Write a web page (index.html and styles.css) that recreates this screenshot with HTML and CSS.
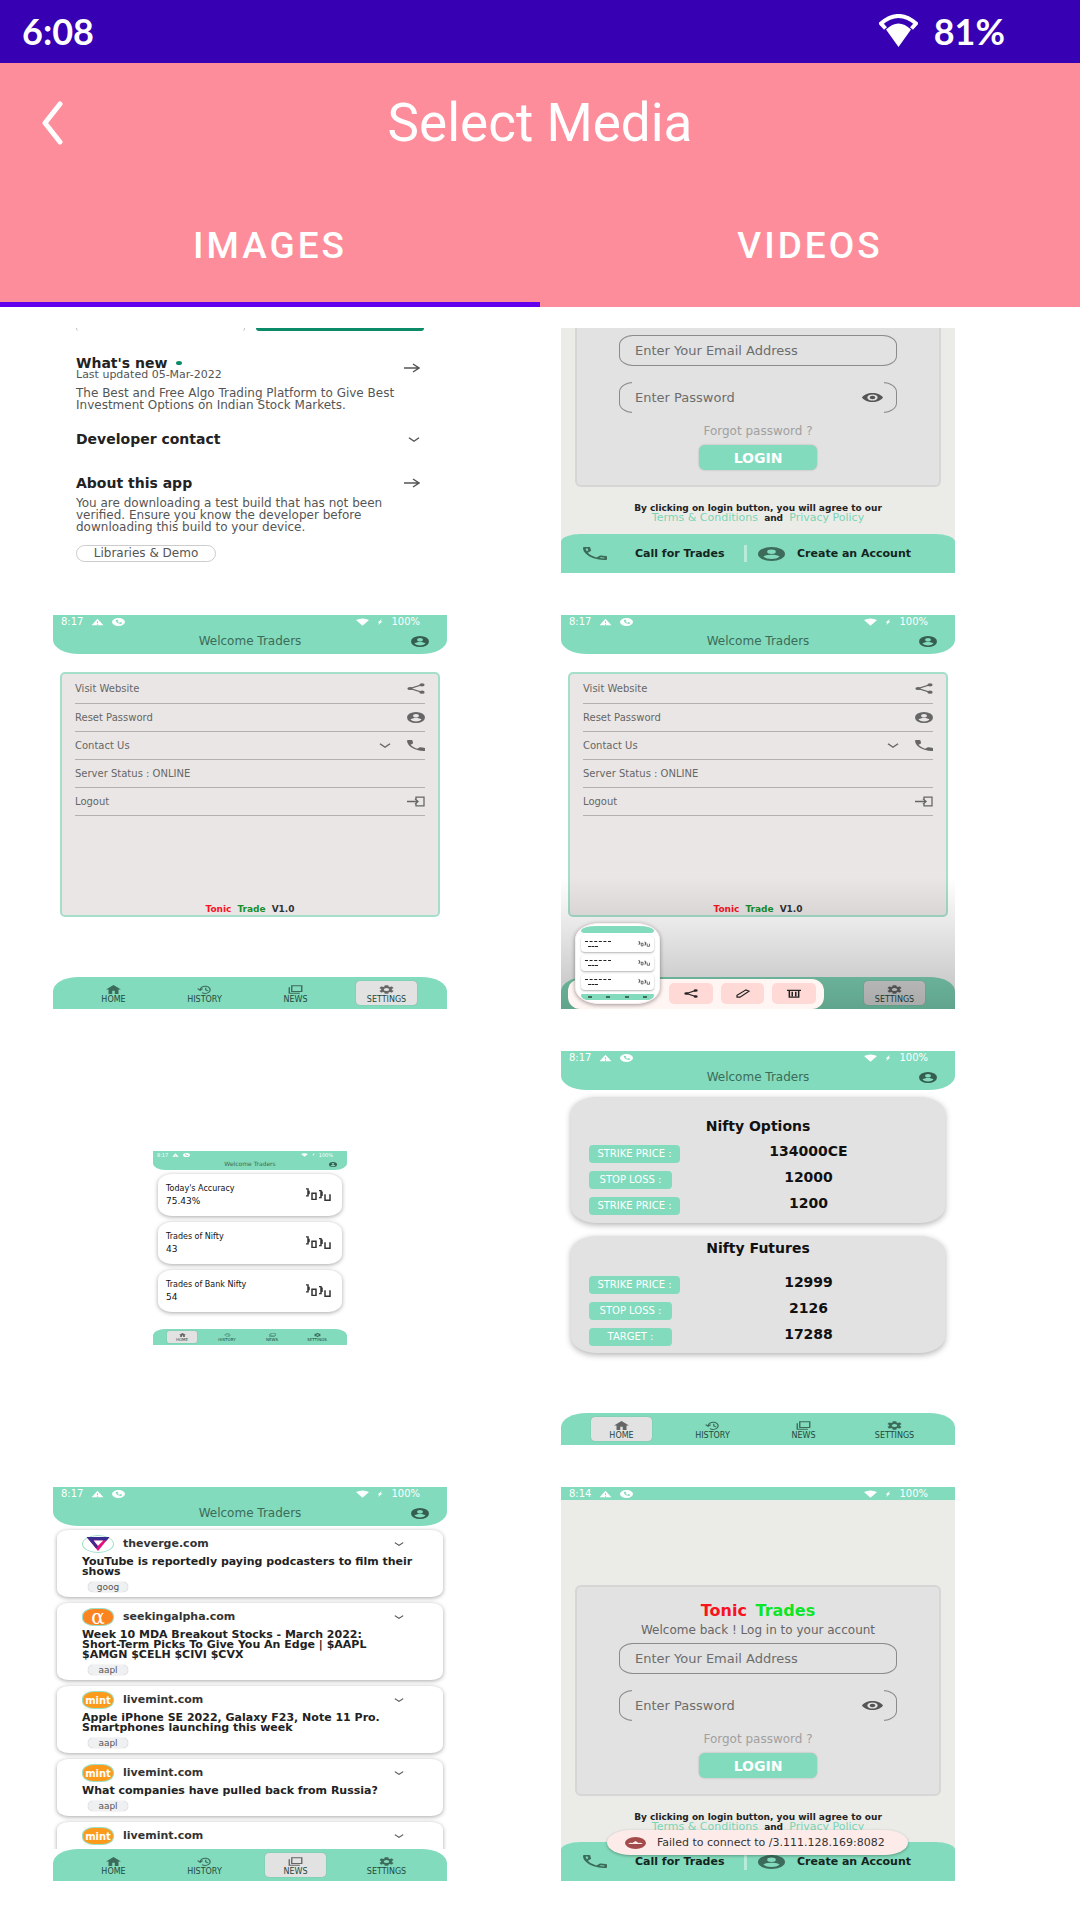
FILE: index.html
```html
<!DOCTYPE html>
<html lang="en">
<head>
<meta charset="utf-8">
<meta name="viewport" content="width=device-width, initial-scale=1">
<title>Select Media</title>
<link rel="stylesheet" href="styles.css">
</head>
<body>
<svg class="defs" aria-hidden="true">
  <symbol id="wifi" viewBox="0 0 39 33" preserveAspectRatio="none"><path d="M19.500 33 7 15.500Q19.500 3.500 32 15.500Z" fill="currentColor"/><path d="M6.500 14.500 2 9.500Q19.500-5.500 37 9.500L32.500 14.500" fill="none" stroke="currentColor" stroke-width="4"/></symbol>
  <symbol id="wifi-full" viewBox="0 0 24 24" preserveAspectRatio="none"><path d="M12 23 0 6Q12-3 24 6Z" fill="currentColor"/></symbol>
  <symbol id="alert" viewBox="0 0 24 24" preserveAspectRatio="none"><path d="M1 22h22L12 2zm10-4h2v2h-2zm0-8h2v6h-2z" fill="currentColor" fill-rule="evenodd"/></symbol>
  <symbol id="call-dot" viewBox="0 0 24 24" preserveAspectRatio="none"><path d="M12 0a12 12 0 1 0 0 24 12 12 0 0 0 0-24zM7 6l3-1 2 4-2 2q1 2 4 3l2-2 3 3-2 3Q7 17 7 6z" fill="currentColor" fill-rule="evenodd"/></symbol>
  <symbol id="bolt" viewBox="0 0 24 24" preserveAspectRatio="none"><path d="M20 0 2 14h8L4 24 22 10h-8z" fill="currentColor"/></symbol>
  <symbol id="user" viewBox="0 0 20 20" preserveAspectRatio="none"><path d="M10 0a10 10 0 1 0 0 20 10 10 0 0 0 0-20zm0 3.500a3.200 3.200 0 1 1 0 6.400 3.200 3.200 0 0 1 0-6.400zm0 13.700a7.200 7.200 0 0 1-6-3.200c0-2 4-3.100 6-3.100s6 1.100 6 3.100a7.200 7.200 0 0 1-6 3.200z" fill="currentColor" fill-rule="evenodd"/></symbol>
  <symbol id="share" viewBox="0 0 24 24" preserveAspectRatio="none"><path d="M20 4 4 12l16 8" fill="none" stroke="currentColor" stroke-width="2.500"/><circle cx="20" cy="4" r="3.500" fill="currentColor"/><circle cx="4" cy="12" r="3.500" fill="currentColor"/><circle cx="20" cy="20" r="3.500" fill="currentColor"/></symbol>
  <symbol id="phone" viewBox="3 3 18 18" preserveAspectRatio="none"><path d="M6.540 5c.060.890.210 1.760.450 2.590l-1.200 1.200c-.410-1.200-.670-2.470-.760-3.790h1.510m9.860 12.020c.850.240 1.720.390 2.600.450v1.490c-1.320-.090-2.590-.350-3.800-.750l1.200-1.190M7.500 3H4c-.550 0-1 .450-1 1 0 9.390 7.610 17 17 17 .550 0 1-.450 1-1v-3.490c0-.550-.450-1-1-1-1.240 0-2.450-.200-3.570-.570-.100-.040-.210-.050-.310-.050-.260 0-.510.100-.710.290l-2.200 2.200c-2.830-1.450-5.150-3.760-6.590-6.590l2.200-2.200c.280-.280.360-.670.250-1.020C8.700 6.450 8.500 5.250 8.500 4c0-.550-.450-1-1-1z" fill="currentColor"/></symbol>
  <symbol id="phone-solid" viewBox="3 3 18 18" preserveAspectRatio="none"><path d="M6.620 10.790c1.440 2.830 3.760 5.140 6.590 6.590l2.200-2.200c.270-.270.670-.360 1.020-.240 1.120.370 2.330.570 3.570.570.550 0 1 .450 1 1V20c0 .550-.450 1-1 1-9.390 0-17-7.610-17-17 0-.550.450-1 1-1h3.500c.550 0 1 .450 1 1 0 1.250.200 2.450.570 3.570.110.350.030.740-.250 1.020z" fill="currentColor"/></symbol>
  <symbol id="chevron" viewBox="0 0 12 6" preserveAspectRatio="none"><path d="M1 1l5 4 5-4" fill="none" stroke="currentColor" stroke-width="1.500"/></symbol>
  <symbol id="arrow" viewBox="0 0 16 10" preserveAspectRatio="none"><path d="M0 5h15M9 1l6 4-6 4" fill="none" stroke="currentColor" stroke-width="1.500"/></symbol>
  <symbol id="logout" viewBox="0 0 18 10" preserveAspectRatio="none"><path d="M0 5h11M8 2.500 11 5 8 7.500M9 3V1h8v8H9V7" fill="none" stroke="currentColor" stroke-width="1.300"/></symbol>
  <symbol id="home" viewBox="0 0 24 20" preserveAspectRatio="none"><path d="M10 20v-7h4v7h6V10h4L12 0 0 10h4v10z" fill="currentColor"/></symbol>
  <symbol id="history" viewBox="0 0 24 20" preserveAspectRatio="none"><path d="M5 11a8 8 0 1 1 3 6M1 8l4 4 4-4M14 6v5l4 2" fill="none" stroke="currentColor" stroke-width="2"/></symbol>
  <symbol id="news" viewBox="0 0 24 20" preserveAspectRatio="none"><path d="M6 1.500h16v13H6zM2 5v13.500h17" fill="none" stroke="currentColor" stroke-width="2.200"/></symbol>
  <symbol id="gear" viewBox="2 2 20 20" preserveAspectRatio="none"><path d="M19.140 12.940c.040-.300.060-.610.060-.940 0-.320-.020-.640-.070-.940l2.030-1.580c.180-.140.230-.410.120-.610l-1.920-3.320c-.120-.220-.370-.290-.590-.220l-2.390.960c-.500-.380-1.030-.700-1.620-.940L14.400 2.810c-.040-.240-.240-.410-.480-.410h-3.840c-.240 0-.430.170-.470.410L9.250 5.350C8.660 5.590 8.120 5.920 7.630 6.290L5.240 5.330c-.220-.080-.470 0-.590.220L2.740 8.870c-.120.210-.080.470.120.610l2.030 1.580c-.050.300-.090.630-.090.940s.020.640.070.940l-2.030 1.580c-.180.140-.230.410-.120.610l1.920 3.320c.120.220.370.290.590.220l2.390-.960c.500.380 1.030.700 1.620.940l.360 2.540c.050.240.240.410.480.410h3.840c.240 0 .440-.170.470-.410l.360-2.540c.590-.240 1.130-.560 1.620-.940l2.390.960c.220.080.470 0 .590-.220l1.920-3.320c.120-.220.070-.470-.120-.610zM12 15.600a3.600 3.600 0 1 1 0-7.200 3.600 3.600 0 0 1 0 7.200z" fill="currentColor"/></symbol>
  <symbol id="eye" viewBox="1 4 22 16" preserveAspectRatio="none"><path d="M12 4C7 4 2.700 7.300 1 12c1.700 4.700 6 8 11 8s9.300-3.300 11-8c-1.700-4.700-6-8-11-8zm0 13.400a5.400 5.400 0 1 1 0-10.800 5.400 5.400 0 0 1 0 10.800zm0-8.400a3 3 0 1 0 0 6 3 3 0 0 0 0-6z" fill="currentColor"/></symbol>
  <symbol id="pencil" viewBox="0 0 14 10" preserveAspectRatio="none"><path d="M1 9V7l9-6 3 1.500L4 9z" fill="none" stroke="currentColor" stroke-width="1.200"/></symbol>
  <symbol id="trash" viewBox="0 0 12 10" preserveAspectRatio="none"><path d="M0 1.500h12M2 2v7h8V2M4.500 3v5M7.500 3v5" fill="none" stroke="currentColor" stroke-width="1.300"/></symbol>
  <symbol id="candles" viewBox="0 0 26 16" preserveAspectRatio="none"><path d="M1 1h2v8H1M4 3v4M7 6h4v7H7zM14 3h2v8h-2M17 4v5M20 7v7h5V7" fill="none" stroke="currentColor" stroke-width="1.500"/></symbol>
</svg>

<header class="top">
  <div class="device-bar">
    <span>6:08</span>
    <span class="device-state"><svg class="device-wifi"><use href="#wifi"/></svg>81%</span>
  </div>
  <div class="toolbar">
    <button class="back" type="button" aria-label="Back"><svg viewBox="0 0 22 44"><path d="M19 3 4 22l15 19" fill="none" stroke="currentColor" stroke-width="5" stroke-linecap="round" stroke-linejoin="round"/></svg></button>
    <h1>Select Media</h1>
  </div>
  <nav class="tabs" role="tablist">
    <button class="tab tab-on" type="button" role="tab" aria-selected="true">IMAGES</button>
    <button class="tab" type="button" role="tab" aria-selected="false">VIDEOS</button>
  </nav>
</header>

<main class="gallery">
  <section class="shot cut store">
    <div class="store-bars"><i class="bar-line"></i><i class="bar-fill"></i></div>
    <div class="store-row whats">
      <div><h2>What's new <i class="dot"></i></h2><small>Last updated 05-Mar-2022</small></div>
      <svg class="i-arrow"><use href="#arrow"/></svg>
    </div>
    <p>The Best and Free Algo Trading Platform to Give Best<br>Investment Options on Indian Stock Markets.</p>
    <div class="store-row contact"><h2>Developer contact</h2><svg class="i-chevron"><use href="#chevron"/></svg></div>
    <div class="store-row about"><h2>About this app</h2><svg class="i-arrow"><use href="#arrow"/></svg></div>
    <p>You are downloading a test build that has not been<br>verified. Ensure you know the developer before<br>downloading this build to your device.</p>
    <span class="chip">Libraries &amp; Demo</span>
  </section>

  <section class="shot cut login">
    <form class="login-card">
      <label class="field"><input type="email" placeholder="Enter Your Email Address" aria-label="Email address"></label>
      <label class="field field-open"><input type="password" placeholder="Enter Password" aria-label="Password"><svg class="i-eye"><use href="#eye"/></svg></label>
      <a class="forgot" href="#">Forgot password ?</a>
      <button class="submit" type="button">LOGIN</button>
    </form>
    <p class="legal">By clicking on login button, you will agree to our<br><a href="#">Terms &amp; Conditions</a> and <a href="#">Privacy Policy</a></p>
    <div class="login-bar">
      <svg class="i-call"><use href="#phone"/></svg><b>Call for Trades</b><i class="split"></i><svg class="i-account"><use href="#user"/></svg><b>Create an Account</b>
    </div>
  </section>

  <section class="shot">
    <header class="app-head">
      <div class="mini-bar"><span>8:17</span><svg><use href="#alert"/></svg><svg><use href="#call-dot"/></svg><svg class="push"><use href="#wifi-full"/></svg><svg class="i-bolt"><use href="#bolt"/></svg><span>100%</span></div>
      <div class="app-title"><span>Welcome Traders</span><svg class="i-user"><use href="#user"/></svg></div>
    </header>
    <div class="settings">
      <ul>
        <li>Visit Website<svg class="i-row"><use href="#share"/></svg></li>
        <li>Reset Password<svg class="i-row"><use href="#user"/></svg></li>
        <li>Contact Us<svg class="i-down"><use href="#chevron"/></svg><svg class="i-row"><use href="#phone-solid"/></svg></li>
        <li>Server Status : ONLINE</li>
        <li>Logout<svg class="i-row"><use href="#logout"/></svg></li>
      </ul>
      <p class="version"><b class="red">Tonic</b><b class="green">Trade</b><b>V1.0</b></p>
    </div>
    <nav class="app-nav">
      <a href="#"><svg><use href="#home"/></svg>HOME</a>
      <a href="#"><svg><use href="#history"/></svg>HISTORY</a>
      <a href="#"><svg><use href="#news"/></svg>NEWS</a>
      <a class="on" href="#"><svg><use href="#gear"/></svg>SETTINGS</a>
    </nav>
  </section>

  <section class="shot">
    <header class="app-head">
      <div class="mini-bar"><span>8:17</span><svg><use href="#alert"/></svg><svg><use href="#call-dot"/></svg><svg class="push"><use href="#wifi-full"/></svg><svg class="i-bolt"><use href="#bolt"/></svg><span>100%</span></div>
      <div class="app-title"><span>Welcome Traders</span><svg class="i-user"><use href="#user"/></svg></div>
    </header>
    <div class="settings">
      <ul>
        <li>Visit Website<svg class="i-row"><use href="#share"/></svg></li>
        <li>Reset Password<svg class="i-row"><use href="#user"/></svg></li>
        <li>Contact Us<svg class="i-down"><use href="#chevron"/></svg><svg class="i-row"><use href="#phone-solid"/></svg></li>
        <li>Server Status : ONLINE</li>
        <li>Logout<svg class="i-row"><use href="#logout"/></svg></li>
      </ul>
      <p class="version"><b class="red">Tonic</b><b class="green">Trade</b><b>V1.0</b></p>
    </div>
    <nav class="app-nav nav-end">
      <a class="on" href="#"><svg><use href="#gear"/></svg>SETTINGS</a>
    </nav>
    <div class="shade"></div>
    <div class="actions">
      <button type="button" aria-label="Share"><svg><use href="#share"/></svg></button>
      <button type="button" aria-label="Edit"><svg><use href="#pencil"/></svg></button>
      <button type="button" aria-label="Delete"><svg><use href="#trash"/></svg></button>
    </div>
    <div class="preview">
      <div class="preview-head"></div>
      <div class="preview-card"><span><i></i><i></i></span><svg><use href="#candles"/></svg></div>
      <div class="preview-card"><span><i></i><i></i></span><svg><use href="#candles"/></svg></div>
      <div class="preview-card"><span><i></i><i></i></span><svg><use href="#candles"/></svg></div>
      <div class="preview-foot"><i></i><i></i><i></i><i></i></div>
    </div>
  </section>

  <section class="shot shot-small">
    <header class="app-head">
      <div class="mini-bar"><span>8:17</span><svg><use href="#alert"/></svg><svg><use href="#call-dot"/></svg><svg class="push"><use href="#wifi-full"/></svg><svg class="i-bolt"><use href="#bolt"/></svg><span>100%</span></div>
      <div class="app-title"><span>Welcome Traders</span><svg class="i-user"><use href="#user"/></svg></div>
    </header>
    <div class="stats">
      <article><div><h3>Today's Accuracy</h3><b>75.43%</b></div><svg><use href="#candles"/></svg></article>
      <article><div><h3>Trades of Nifty</h3><b>43</b></div><svg><use href="#candles"/></svg></article>
      <article><div><h3>Trades of Bank Nifty</h3><b>54</b></div><svg><use href="#candles"/></svg></article>
    </div>
    <nav class="app-nav">
      <a class="on" href="#"><svg><use href="#home"/></svg>HOME</a>
      <a href="#"><svg><use href="#history"/></svg>HISTORY</a>
      <a href="#"><svg><use href="#news"/></svg>NEWS</a>
      <a href="#"><svg><use href="#gear"/></svg>SETTINGS</a>
    </nav>
  </section>

  <section class="shot">
    <header class="app-head">
      <div class="mini-bar"><span>8:17</span><svg><use href="#alert"/></svg><svg><use href="#call-dot"/></svg><svg class="push"><use href="#wifi-full"/></svg><svg class="i-bolt"><use href="#bolt"/></svg><span>100%</span></div>
      <div class="app-title"><span>Welcome Traders</span><svg class="i-user"><use href="#user"/></svg></div>
    </header>
    <div class="calls">
      <article class="call call-tall">
        <h2>Nifty Options</h2>
        <dl>
          <dt>STRIKE PRICE :</dt><dd>134000CE</dd>
          <dt class="short">STOP LOSS :</dt><dd>12000</dd>
          <dt>STRIKE PRICE :</dt><dd>1200</dd>
        </dl>
      </article>
      <article class="call">
        <h2>Nifty Futures</h2>
        <dl>
          <dt>STRIKE PRICE :</dt><dd>12999</dd>
          <dt class="short">STOP LOSS :</dt><dd>2126</dd>
          <dt class="short">TARGET :</dt><dd>17288</dd>
        </dl>
      </article>
    </div>
    <nav class="app-nav">
      <a class="on" href="#"><svg><use href="#home"/></svg>HOME</a>
      <a href="#"><svg><use href="#history"/></svg>HISTORY</a>
      <a href="#"><svg><use href="#news"/></svg>NEWS</a>
      <a href="#"><svg><use href="#gear"/></svg>SETTINGS</a>
    </nav>
  </section>

  <section class="shot">
    <header class="app-head">
      <div class="mini-bar"><span>8:17</span><svg><use href="#alert"/></svg><svg><use href="#call-dot"/></svg><svg class="push"><use href="#wifi-full"/></svg><svg class="i-bolt"><use href="#bolt"/></svg><span>100%</span></div>
      <div class="app-title"><span>Welcome Traders</span><svg class="i-user"><use href="#user"/></svg></div>
    </header>
    <div class="feed">
      <article>
        <header><span class="logo verge"><svg viewBox="0 0 32 18" preserveAspectRatio="none"><path d="M3 1h26L16 17z" fill="#e5127d"/><path d="M3 1h26l-3 4H11l5 7-2 2z" fill="#3b2a8f"/><path d="M11 5h11l-6 6z" fill="#fff"/></svg></span>theverge.com<svg class="i-more"><use href="#chevron"/></svg></header>
        <h3>YouTube is reportedly paying podcasters to film their<br>shows</h3>
        <span class="tag">goog</span>
      </article>
      <article>
        <header><span class="logo alpha">α</span>seekingalpha.com<svg class="i-more"><use href="#chevron"/></svg></header>
        <h3>Week 10 MDA Breakout Stocks - March 2022:<br>Short-Term Picks To Give You An Edge | $AAPL<br>$AMGN $CELH $CIVI $CVX</h3>
        <span class="tag">aapl</span>
      </article>
      <article>
        <header><span class="logo">mint</span>livemint.com<svg class="i-more"><use href="#chevron"/></svg></header>
        <h3>Apple iPhone SE 2022, Galaxy F23, Note 11 Pro.<br>Smartphones launching this week</h3>
        <span class="tag">aapl</span>
      </article>
      <article>
        <header><span class="logo">mint</span>livemint.com<svg class="i-more"><use href="#chevron"/></svg></header>
        <h3>What companies have pulled back from Russia?</h3>
        <span class="tag">aapl</span>
      </article>
      <article class="last">
        <header><span class="logo">mint</span>livemint.com<svg class="i-more"><use href="#chevron"/></svg></header>
      </article>
    </div>
    <nav class="app-nav">
      <a href="#"><svg><use href="#home"/></svg>HOME</a>
      <a href="#"><svg><use href="#history"/></svg>HISTORY</a>
      <a class="on" href="#"><svg><use href="#news"/></svg>NEWS</a>
      <a href="#"><svg><use href="#gear"/></svg>SETTINGS</a>
    </nav>
  </section>

  <section class="shot login">
    <div class="mini-bar"><span>8:14</span><svg><use href="#alert"/></svg><svg><use href="#call-dot"/></svg><svg class="push"><use href="#wifi-full"/></svg><svg class="i-bolt"><use href="#bolt"/></svg><span>100%</span></div>
    <form class="login-card">
      <h2><span class="red">Tonic</span> <span class="lime">Trades</span></h2>
      <p class="hello">Welcome back ! Log in to your account</p>
      <label class="field"><input type="email" placeholder="Enter Your Email Address" aria-label="Email address"></label>
      <label class="field field-open"><input type="password" placeholder="Enter Password" aria-label="Password"><svg class="i-eye"><use href="#eye"/></svg></label>
      <a class="forgot" href="#">Forgot password ?</a>
      <button class="submit" type="button">LOGIN</button>
    </form>
    <p class="legal">By clicking on login button, you will agree to our<br><a href="#">Terms &amp; Conditions</a> and <a href="#">Privacy Policy</a></p>
    <div class="login-bar">
      <svg class="i-call"><use href="#phone"/></svg><b>Call for Trades</b><i class="split"></i><svg class="i-account"><use href="#user"/></svg><b>Create an Account</b>
    </div>
    <div class="toast"><svg viewBox="0 0 20 12" preserveAspectRatio="none"><ellipse cx="10" cy="6" rx="10" ry="6" fill="#a34b4b"/><path d="M3 7q2-2 4-1l3-2 3 2q2-1 4 1z" fill="#fdebea"/></svg>Failed to connect to /3.111.128.169:8082</div>
  </section>
</main>
</body>
</html>
```
FILE: styles.css
```css
* { box-sizing: border-box; }
body, h1, h2, h3, p, ul, dl, dd { margin: 0; padding: 0; }
body { background: #fff; font-family: "DejaVu Sans", sans-serif; color: #222; }
button, input { font: inherit; color: inherit; border: 0; padding: 0; background: none; }
a { color: inherit; text-decoration: none; }
svg { display: block; flex: none; }
.defs { position: absolute; width: 0; height: 0; }

/* Screen header */
.top { background: #fe8d9b; color: #fff; }
.device-bar {
  display: flex; justify-content: space-between; align-items: center;
  height: 63px; padding: 0 75px 2px 22px;
  background: #3700b3; font: 700 36px/1 Lato, sans-serif;
}
.device-state { display: flex; align-items: center; gap: 16px; }
.device-wifi { width: 39px; height: 33px; }
.toolbar { display: grid; grid-template-columns: 100px 1fr 100px; align-items: center; height: 120px; }
.back { width: 64px; padding-left: 41px; cursor: pointer; }
.back svg { width: 22px; height: 44px; }
h1 { font: 400 53px/64px Roboto, sans-serif; text-align: center; }
.tabs { display: grid; grid-template-columns: 1fr 1fr; }
.tab {
  height: 124px; padding-top: 6px; border-bottom: 5px solid transparent;
  font: 500 37px/1 Roboto, sans-serif; letter-spacing: 3px; cursor: pointer;
}
.tab-on { border-bottom-color: #6200ee; }

/* Media grid */
.gallery {
  display: grid; grid-template-columns: repeat(2, minmax(0, 508px));
  row-gap: 42px; padding: 21px 0 38px 53px;
}
.shot {
  position: relative; display: flex; flex-direction: column;
  width: 394px; height: 394px; overflow: hidden; font-size: 10px; line-height: 12px;
}
.cut { height: 245px; }
.red { color: #f8131f; }
.green { color: #16902c; }
.lime { color: #0ee527; }

/* Store page */
.store { padding: 0 23px; color: #555; }
.store-bars { display: grid; grid-template-columns: 169px 168px; gap: 11px; height: 3px; margin-bottom: 25px; }
.bar-line { border: 1px solid #bbb; border-width: 0 1px; border-radius: 0 0 5px 5px; }
.bar-fill { background: #0a8a66; border-radius: 0 0 4px 4px; }
.store-row { display: flex; justify-content: space-between; align-items: center; padding-right: 4px; }
.store h2 { color: #222; font-size: 14px; line-height: 14px; }
.store small { display: block; font-size: 11px; line-height: 10px; }
.store p { font-size: 12px; line-height: 12px; white-space: nowrap; }
.dot { display: inline-block; width: 6px; height: 4px; margin: 0 0 3px 4px; border-radius: 50%; background: #0a8a66; }
.whats { margin-bottom: 7px; }
.contact { margin: 21px 0 30px; }
.about { margin-bottom: 7px; }
.store .chip {
  align-self: flex-start; width: 140px; margin-top: 12px; border: 1px solid #ccc; border-radius: 9px;
  font-size: 12px; line-height: 15px; text-align: center;
}
.i-arrow { width: 16px; height: 10px; }
.i-chevron { width: 12px; height: 5px; }

/* Trading app frame */
.app-head { height: 39px; background: #82dbbc; border-radius: 0 0 26px 26px / 0 0 14px 14px; }
.mini-bar {
  display: flex; align-items: center; gap: 8px; flex: none;
  height: 13px; padding: 0 27px 0 8px; background: #82dbbc; color: #fff; font-size: 10px;
}
.mini-bar svg { width: 13px; height: 8px; }
.mini-bar .push { margin-left: auto; }
.mini-bar .i-bolt { width: 6px; height: 6px; }
.app-head .mini-bar { background: none; }
.app-title { display: grid; grid-template-columns: 36px 1fr 36px; align-items: center; height: 26px; color: #3c6b5a; font-size: 12px; }
.app-title span { grid-column: 2; text-align: center; }
.i-user { width: 18px; height: 11px; color: #355e50; }
.app-nav {
  display: flex; gap: 30px; flex: none; height: 32px; margin-top: auto; padding: 4px 30px;
  background: #82dbbc; border-radius: 26px 26px 0 0 / 14px 14px 0 0;
}
.app-nav a {
  display: flex; flex-direction: column; align-items: center; gap: 1px;
  width: 61px; height: 24px; padding-top: 4px; font-size: 8px; line-height: 9px; color: #24493c;
}
.app-nav svg { width: 15px; height: 9px; color: #3c6b5a; }
.app-nav .on { background: #e2e2e2; border-radius: 4px; box-shadow: 0 0 1px #888; }
.app-nav .on svg { color: #666; }
.nav-end { justify-content: flex-end; }

/* Settings */
.settings {
  display: flex; flex-direction: column; height: 245px; margin: 18px 7px 0; padding: 0 13px;
  border: 2px solid #a5dfc9; border-radius: 5px; background: #eae6e5; color: #666;
}
.settings ul { list-style: none; }
.settings li {
  display: flex; align-items: center; gap: 16px; height: 28px;
  border-bottom: 1px solid #b3b0af; font-size: 10px;
}
.settings li:first-child { height: 30px; }
.i-row { width: 18px; height: 11px; margin-left: auto; }
.i-down { width: 12px; height: 5px; margin-left: auto; }
.i-down + .i-row { margin-left: 0; }
.version { display: flex; justify-content: center; gap: 6px; margin-top: auto; font-size: 9px; }
.version b:last-child { color: #333; }
.shade { position: absolute; inset: 262px 0 0; background: linear-gradient(rgba(0, 0, 0, 0), rgba(0, 0, 0, .25)); }
.actions {
  position: absolute; left: 7px; bottom: 0; display: flex; gap: 8px; width: 256px; height: 30px;
  padding: 4px 8px 5px 101px; background: #fff5f3; border-radius: 12px;
}
.actions button { display: grid; place-items: center; flex: 1; background: #ffd9d6; border-radius: 5px; }
.actions svg { width: 14px; height: 9px; color: #222; }
.preview {
  position: absolute; left: 14px; bottom: 5px; display: flex; flex-direction: column; gap: 3px;
  width: 85px; height: 81px; padding: 2px 5px; background: #fff; border: 1px solid #fdeeee;
  border-radius: 24px / 16px; box-shadow: 0 1px 4px rgba(0, 0, 0, .4); overflow: hidden;
}
.preview-head { height: 7px; background: #82dbbc; border-radius: 20px 20px 6px 6px / 6px 6px 3px 3px; }
.preview-card {
  display: flex; justify-content: space-between; align-items: center; height: 16px; padding: 0 4px;
  border-radius: 4px; box-shadow: 0 1px 2px rgba(0, 0, 0, .3);
}
.preview-card i { display: block; width: 26px; border-top: 1px dashed #222; }
.preview-card i + i { width: 10px; margin: 4px 0 0 3px; }
.preview-card svg { width: 12px; height: 6px; }
.preview-foot { display: flex; justify-content: space-around; align-items: center; height: 6px; margin-top: 1px; background: #82dbbc; border-radius: 2px 2px 10px 10px; }
.preview-foot i { width: 4px; height: 2px; background: #3c6b5a; }

/* Accuracy dashboard, stored at half size */
.shot-small { width: 194px; height: 194px; margin: 100px; }
.shot-small .app-head { height: 19px; border-radius: 0 0 12px 12px / 0 0 7px 7px; }
.shot-small .mini-bar { height: 7px; gap: 4px; padding: 0 14px 0 4px; font-size: 5px; line-height: 6px; }
.shot-small .mini-bar svg { width: 7px; height: 4px; }
.shot-small .mini-bar .i-bolt { width: 3px; height: 3px; }
.shot-small .app-title { grid-template-columns: 18px 1fr 18px; height: 12px; font-size: 6px; line-height: 8px; }
.shot-small .i-user { width: 8px; height: 5px; }
.stats { display: grid; gap: 6px; padding: 4px 5px 0; }
.stats article {
  display: flex; justify-content: space-between; align-items: center; height: 42px; padding: 0 11px 0 8px;
  border-radius: 14px / 10px; box-shadow: 0 1px 4px rgba(0, 0, 0, .35);
}
.stats h3 { font-size: 8px; line-height: 12px; font-weight: 400; color: #111; }
.stats b { font-size: 9px; line-height: 12px; font-weight: 400; color: #111; }
.stats svg { width: 26px; height: 14px; color: #333; }
.shot-small .app-nav { gap: 15px; height: 16px; padding: 2px 14px; border-radius: 12px 12px 0 0 / 7px 7px 0 0; }
.shot-small .app-nav a { width: 30px; height: 12px; padding-top: 2px; gap: 0; font-size: 4px; line-height: 5px; }
.shot-small .app-nav svg { width: 7px; height: 4px; }
.shot-small .app-nav .on { border-radius: 2px; }

/* Option calls */
.calls { display: grid; gap: 13px; padding: 7px 10px 0; }
.call { height: 117px; padding: 5px 18px 0; background: #e2e2e2; border-radius: 26px / 16px; box-shadow: 0 2px 6px rgba(0, 0, 0, .3); color: #111; }
.call h2 { font-size: 14px; line-height: 14px; text-align: center; font-weight: 700; }
.call dl { display: grid; grid-template-columns: 91px 1fr; grid-auto-rows: 18px; row-gap: 8px; margin-top: 21px; }
.call-tall { height: 126px; padding-top: 22px; }
.call-tall dl { margin-top: 12px; }
.call dt { width: 91px; background: #82dbbc; border-radius: 4px; color: #fff; font-size: 10px; line-height: 18px; text-align: center; white-space: nowrap; }
.call .short { width: 83px; }
.call dd { padding-left: 10px; font-size: 14px; line-height: 12px; font-weight: 700; text-align: center; }

/* News feed */
.feed { display: flex; flex-direction: column; gap: 6px; height: 323px; padding: 4px 4px 0; overflow: hidden; }
.feed article { flex: none; padding: 5px 25px; border-radius: 12px / 8px; box-shadow: 0 1px 4px rgba(0, 0, 0, .35); background: #fff; }
.feed header { display: flex; align-items: center; gap: 9px; height: 18px; font-size: 11px; font-weight: 700; color: #333; }
.feed h3 { margin: 4px 0 5px; font-size: 11px; line-height: 10px; color: #222; white-space: nowrap; }
.feed .last { height: 60px; }
.logo {
  display: grid; place-items: center; width: 32px; height: 18px; border: 1px solid #9ddfc8; border-radius: 12px / 8px;
  background: #fc9a1b; color: #fff; font-size: 10px; line-height: 9px;
}
.logo.alpha { background: #fb8420; font: 400 20px/12px "DejaVu Serif", serif; }
.logo.verge { background: #fff; border-radius: 50%; }
.logo.verge svg { width: 28px; height: 16px; }
.i-more { width: 10px; height: 4px; margin: 0 14px 0 auto; color: #555; }
.tag { display: block; width: 40px; margin-left: 6px; border-radius: 5px; background: #eff0f1; box-shadow: 0 0 1px #999; color: #555; font-size: 9px; line-height: 10px; text-align: center; }

/* Login */
.login { background: #ebece7; }
.login-card {
  display: flex; flex-direction: column; align-items: center; height: 211px; margin: 85px 14px 0; padding-top: 17px;
  background: #e2e2e2; border: 2px solid #d6d6d6; border-radius: 6px; flex: none;
}
.cut .login-card { height: 159px; margin-top: 0; padding-top: 7px; border-top: 0; border-radius: 0 0 6px 6px; }
.login-card h2 { font-size: 16px; line-height: 14px; }
.login-card .lime { margin-left: 3px; }
.hello { margin: 6px 0 7px; font-size: 12px; line-height: 12px; color: #666; }
.field {
  position: relative; display: flex; align-items: center; width: 278px; height: 31px; margin-bottom: 16px;
  padding: 0 13px 0 15px; border: 1px solid #8b8b8b; border-radius: 14px / 10px;
}
/* Opens the outline along its top and bottom edges */
.field-open { margin-bottom: 12px; }
.field-open::before { content: ""; position: absolute; inset: -1px 12px; background: #e2e2e2; }
.field input, .field svg { position: relative; }
.field input { flex: 1; min-width: 0; outline: 0; font-size: 13px; line-height: 15px; }
.field input::placeholder { color: #6d6d6d; opacity: 1; }
.i-eye { width: 21px; height: 9px; color: #555; }
.forgot { color: #a0a0a0; font-size: 12px; line-height: 12px; }
.submit { width: 118px; height: 25px; margin-top: 8px; background: #82dbbc; border-radius: 6px; box-shadow: 0 0 2px #aaa; color: #fff; font-size: 14px; font-weight: 700; }
.legal { margin-top: 16px; color: #222; font-size: 9px; line-height: 10px; font-weight: 700; text-align: center; white-space: nowrap; }
.legal a { margin: 0 3px; font-size: 11px; font-weight: 400; color: #7bd4b5; }
.login-bar {
  display: grid; grid-template-columns: 52px 109px 14px 39px 1fr; align-items: center;
  height: 39px; margin-top: auto; padding-left: 22px; background: #82dbbc; border-radius: 20px 20px 0 0 / 8px 8px 0 0;
  color: #14241e; font-size: 11px; white-space: nowrap;
}
.i-call { width: 24px; height: 13px; color: #3c6b5a; }
.i-account { width: 27px; height: 14px; color: #3c6b5a; }
.split { width: 3px; height: 17px; background: #b8ecd9; }
.toast {
  position: absolute; left: 46px; bottom: 26px; display: flex; align-items: center; gap: 11px;
  width: 301px; height: 25px; padding-left: 18px; background: #fdebea; border-radius: 24px / 13px;
  box-shadow: 0 1px 3px rgba(0, 0, 0, .3); color: #333; font-size: 11px; white-space: nowrap;
}
.toast svg { width: 21px; height: 12px; }
```
